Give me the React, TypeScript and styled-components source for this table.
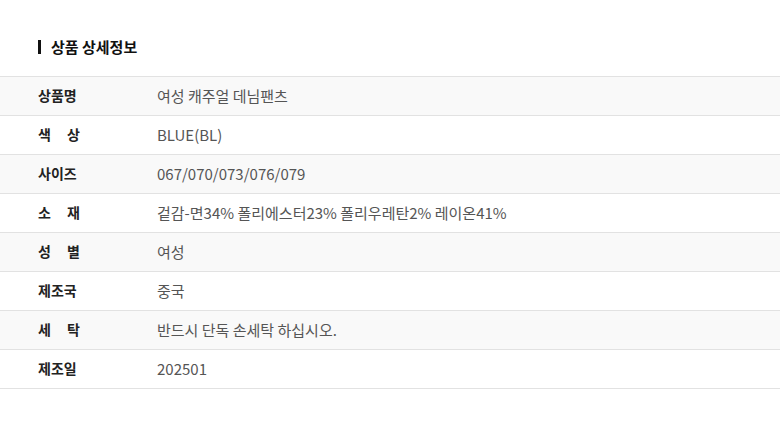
import styled, { createGlobalStyle } from "styled-components";

const GlobalStyle = createGlobalStyle`
    body {
        margin: 0;
        background: #ffffff;
        font-family: "Noto Sans CJK KR", "Noto Sans", sans-serif;
    }
`;

const rows: { label: string[]; value: string }[] = [
    { label: ["상품명"], value: "여성 캐주얼 데님팬츠" },
    { label: ["색", "상"], value: "BLUE(BL)" },
    { label: ["사이즈"], value: "067/070/073/076/079" },
    { label: ["소", "재"], value: "겉감-면34% 폴리에스터23% 폴리우레탄2% 레이온41%" },
    { label: ["성", "별"], value: "여성" },
    { label: ["제조국"], value: "중국" },
    { label: ["세", "탁"], value: "반드시 단독 손세탁 하십시오." },
    { label: ["제조일"], value: "202501" },
];

export default function App() {
    return (
        <Wrap>
            <GlobalStyle />
            <Title>상품 상세정보</Title>
            <Table>
                {rows.map((r, i) => (
                    <Row key={i} $shaded={i % 2 === 0}>
                        <Label>
                            {r.label.map((ch) => (
                                <span key={ch}>{ch}</span>
                            ))}
                        </Label>
                        <Value>{r.value}</Value>
                    </Row>
                ))}
            </Table>
        </Wrap>
    );
}

const Wrap = styled.div`
    width: 780px;
    height: 427px;
    padding-top: 36px;
    box-sizing: border-box;
`;

const Title = styled.h2`
    margin: 0 0 18px 38px;
    display: flex;
    align-items: center;
    gap: 10px;
    font-size: 15px;
    font-weight: 700;
    color: #111;
    line-height: 22px;

    &::before {
        content: "";
        width: 3px;
        height: 14px;
        background: #111;
    }
`;

const Table = styled.div`
    border-top: 1px solid #e2e2e2;
`;

// labels are bold and spread across a fixed width ("색   상")
const Row = styled.div<{ $shaded: boolean }>`
    display: flex;
    align-items: center;
    height: 39px;
    padding: 0 0 2px 38px;
    box-sizing: border-box;
    border-bottom: 1px solid #e2e2e2;
    background: ${(p) => (p.$shaded ? "#f9f9f9" : "#ffffff")};
`;

const Label = styled.div`
    width: 42px;
    margin-right: 77px;
    display: flex;
    justify-content: space-between;
    font-size: 14px;
    font-weight: 700;
    color: #222;
`;

const Value = styled.div`
    font-size: 15px;
    color: #555;
`;
